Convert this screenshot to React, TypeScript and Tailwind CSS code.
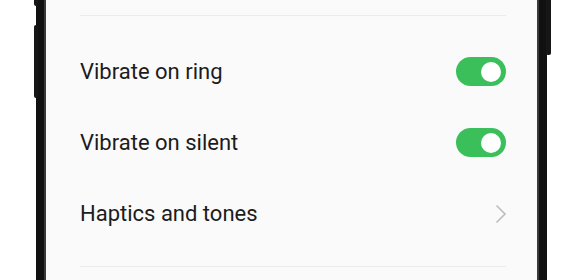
import React from 'react';

function Toggle() {
  return (
    <div className="flex h-[29px] w-[50px] items-center justify-end rounded-full bg-[#3bbf5b] pr-[5px]">
      <div className="h-[20px] w-[20px] rounded-full bg-white" />
    </div>
  );
}

function Chevron() {
  return (
    <svg width="12" height="20" viewBox="0 0 12 20" className="mr-[-1px]">
      <polyline points="1.5,1.5 10,10 1.5,18.5" fill="none" stroke="#bdbdbd" strokeWidth="1.6" />
    </svg>
  );
}

function Row({ label, children }: { label: string; children: React.ReactNode }) {
  return (
    <div className="flex h-[71px] items-center justify-between">
      <span className="text-[22px] leading-none text-[#1c1c1c]">{label}</span>
      {children}
    </div>
  );
}

export default function App() {
  return (
    <div className="relative h-[280px] w-[574px] overflow-hidden bg-white font-['Roboto',sans-serif]">
      {/* side buttons */}
      <div className="absolute left-[34px] top-[-4px] h-[10px] w-[4px] rounded-[2px] bg-[#161616]" />
      <div className="absolute left-[34px] top-[25px] h-[73px] w-[4px] rounded-[2px] bg-[#161616]" />
      <div className="absolute left-[546px] top-[-6px] h-[61px] w-[5px] rounded-[2px] bg-[#161616]" />

      <div className="ml-[36px] flex h-full w-[511px] bg-[#111]">
        <div className="ml-[8px] mr-[8px] flex flex-1 border-x-2 border-[#3a3a3a] bg-[#fafafa]">
          <div className="flex flex-1 flex-col pl-[34px] pr-[31px] pt-[15px]">
            <div className="h-px bg-[#ebebeb]" />
            <div className="h-[20px]" />
            <Row label="Vibrate on ring">
              <Toggle />
            </Row>
            <Row label="Vibrate on silent">
              <Toggle />
            </Row>
            <Row label="Haptics and tones">
              <Chevron />
            </Row>
            <div className="h-[17px]" />
            <div className="h-px bg-[#ebebeb]" />
          </div>
        </div>
      </div>
    </div>
  );
}
